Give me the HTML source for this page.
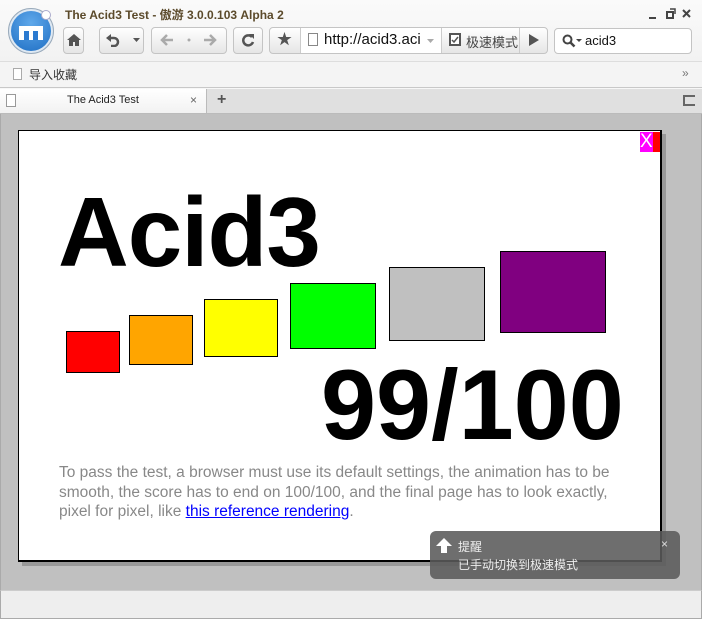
<!DOCTYPE html>
<html><head><meta charset="utf-8"><style>
*{margin:0;padding:0;box-sizing:border-box}
body{width:702px;height:619px;overflow:hidden;background:#f7f7f7;font-family:"Liberation Sans","Noto Sans CJK SC",sans-serif;position:relative}
.a{position:absolute}
.btn{position:absolute;border:1px solid #c4c4c4;border-radius:4px;background:linear-gradient(#fff,#f0f0f0 60%,#e6e6e6)}
.ic{position:absolute;color:#555;font-size:15px;line-height:15px}
.box{position:absolute;border:1px solid #000}
svg{position:absolute}
</style></head><body>
<div class="a" style="left:0;top:0;width:702px;height:62px;background:linear-gradient(#fafafa,#f2f2f2)"></div>
<!-- logo -->
<div class="a" style="left:8px;top:8px;width:46px;height:46px;border-radius:50%;background:#dfe9f3;border:1px solid #9ab"></div>
<div class="a" style="left:11px;top:11px;width:40px;height:40px;border-radius:50%;background:radial-gradient(circle at 50% 30%,#5fa8ea,#1f6fc4)"></div>
<div class="a" style="left:41px;top:10px;width:10px;height:10px;border-radius:50%;background:#fff;border:1px solid #aac"></div>
<div class="a" style="left:19px;top:26px;width:24px;height:14px;background:#fff"></div>
<div class="a" style="left:24px;top:31px;width:5px;height:9px;background:#2b7ad0"></div>
<div class="a" style="left:33px;top:31px;width:5px;height:9px;background:#2b7ad0"></div>
<div class="a" style="left:65px;top:6px;font-size:12px;font-weight:bold;color:#5b4a2b">The Acid3 Test - 傲游 3.0.0.103 Alpha 2</div>
<svg style="left:648px;top:8px" width="50" height="12" viewBox="0 0 50 12"><path d="M1 10h7" stroke="#444" stroke-width="2"/><rect x="19" y="4" width="6" height="6" fill="none" stroke="#444" stroke-width="2"/><path d="M22 1h5v5" fill="none" stroke="#444" stroke-width="1.5"/><path d="M35 2l7 7M42 2l-7 7" stroke="#444" stroke-width="2"/></svg>
<div class="btn" style="left:63px;top:27px;width:21px;height:27px"></div>
<svg style="left:67px;top:34px" width="14" height="12" viewBox="0 0 14 12"><path d="M7 0L0 6h2v6h4V8h2v4h4V6h2z" fill="#555"/></svg>
<div class="btn" style="left:99px;top:27px;width:45px;height:27px"></div>
<svg style="left:106px;top:33px" width="14" height="14" viewBox="0 0 14 14"><path d="M3 5h5a4 4 0 0 1 0 8H5" fill="none" stroke="#555" stroke-width="2.5"/><path d="M0 5l5-4v8z" fill="#555"/></svg>
<svg style="left:133px;top:38px" width="7" height="4"><path d="M0 0h7L3.5 4z" fill="#555"/></svg>
<div class="btn" style="left:151px;top:27px;width:76px;height:27px"></div>
<svg style="left:160px;top:34px" width="60" height="12" viewBox="0 0 60 12"><path d="M2 6h11M7 1L2 6l5 5" fill="none" stroke="#aaa" stroke-width="2.5"/><circle cx="29" cy="6" r="1.5" fill="#aaa"/><path d="M44 6h11M50 1l5 5-5 5" fill="none" stroke="#aaa" stroke-width="2.5"/></svg>
<div class="btn" style="left:233px;top:27px;width:30px;height:27px"></div>
<svg style="left:241px;top:33px" width="14" height="14" viewBox="0 0 14 14"><path d="M11 4A5 5 0 1 0 12 9" fill="none" stroke="#555" stroke-width="2.5"/><path d="M8 1h5v5z" fill="#555"/></svg>
<div class="btn" style="left:269px;top:27px;width:279px;height:27px"></div>
<div class="ic" style="left:277px;top:32px">★</div>
<div class="a" style="left:300px;top:28px;width:142px;height:25px;background:#fff;border-left:1px solid #ccc;border-right:1px solid #ccc"></div>
<div class="a" style="left:308px;top:33px;width:10px;height:13px;border:1px solid #888;background:#fff"></div>
<div class="a" style="left:324px;top:31px;font-size:15px;color:#111;width:96px;overflow:hidden;white-space:nowrap">http://acid3.acid3</div>
<svg style="left:427px;top:39px" width="7" height="4"><path d="M0 0h7L3.5 4z" fill="#aaa"/></svg>
<div class="a" style="left:449px;top:33px;width:12px;height:13px;border:2px solid #555;background:#fff"></div>
<svg style="left:451px;top:36px" width="8" height="8"><path d="M1 4l2 2 4-5" fill="none" stroke="#555" stroke-width="1.5"/></svg>
<div class="a" style="left:466px;top:32px;font-size:13px;color:#444">极速模式</div>
<div class="a" style="left:519px;top:28px;border-left:1px solid #ccc;height:25px"></div>
<svg style="left:529px;top:34px" width="10" height="12"><path d="M0 0l10 6-10 6z" fill="#555"/></svg>
<div class="a" style="left:554px;top:28px;width:138px;height:26px;border:1px solid #c4c4c4;border-radius:4px;background:#fff"></div>
<svg style="left:562px;top:34px" width="20" height="14" viewBox="0 0 20 14"><circle cx="5.5" cy="5.5" r="4" fill="none" stroke="#444" stroke-width="2"/><path d="M8.5 8.5l4 4" stroke="#444" stroke-width="2.5"/><path d="M14 5h6l-3 3z" fill="#444"/></svg>
<div class="a" style="left:585px;top:33px;font-size:13px;color:#111">acid3</div>
<!-- bookmarks -->
<div class="a" style="left:0;top:61px;width:702px;height:27px;background:#f4f4f4;border-top:1px solid #ddd;border-bottom:1px solid #c8c8c8"></div>
<div class="a" style="left:13px;top:68px;width:9px;height:12px;border:1px solid #aaa;background:#fff"></div>
<div class="a" style="left:29px;top:66px;font-size:12px;color:#333">导入收藏</div>
<div class="a" style="left:682px;top:66px;font-size:12px;color:#777">»</div>
<!-- tabs -->
<div class="a" style="left:0;top:89px;width:702px;height:25px;background:#e0e0e0;border-bottom:1px solid #bbb"></div>
<div class="a" style="left:0;top:89px;width:207px;height:24px;background:linear-gradient(#fff,#f2f2f2);border-right:1px solid #bbb"></div>
<div class="a" style="left:6px;top:94px;width:10px;height:13px;border:1px solid #999;background:#fff"></div>
<div class="a" style="left:67px;top:94px;font-size:11px;color:#222">The Acid3 Test</div>
<div class="a" style="left:190px;top:93px;font-size:12px;color:#666">×</div>
<div class="a" style="left:217px;top:91px;font-size:16px;color:#555;font-weight:bold">+</div>
<div class="a" style="left:683px;top:95px;width:12px;height:11px;border:2px solid #666;border-right:none"></div>
<!-- content -->
<div class="a" style="left:0;top:114px;width:702px;height:476px;background:#c0c0c0;border-left:1px solid #aaa;border-right:1px solid #aaa"></div>
<div class="a" style="left:22px;top:134px;width:644px;height:432px;background:#999"></div>
<div class="a" style="left:18px;top:130px;width:644px;height:432px;background:#fff;border:2px solid #000;border-width:1px 2px 2px 1px"></div>
<div class="a" style="left:640px;top:132px;width:13px;height:20px;background:#f0f"></div>
<div class="a" style="left:653px;top:132px;width:7px;height:20px;background:#f00"></div>
<div class="a" style="left:640px;top:131px;font-size:19px;color:#fff;line-height:22px">X</div>
<div class="a" style="left:58px;top:177px;font-size:98px;font-weight:bold;line-height:110px;color:#000;letter-spacing:-1px">Acid3</div>
<div class="box" style="left:66px;top:331px;width:54px;height:42px;background:#f00"></div>
<div class="box" style="left:129px;top:315px;width:64px;height:50px;background:#ffa500"></div>
<div class="box" style="left:204px;top:299px;width:74px;height:58px;background:#ff0"></div>
<div class="box" style="left:290px;top:283px;width:86px;height:66px;background:#0f0"></div>
<div class="box" style="left:389px;top:267px;width:96px;height:74px;background:#c0c0c0"></div>
<div class="box" style="left:500px;top:251px;width:106px;height:82px;background:#800080"></div>
<div class="a" style="left:321px;top:350px;font-size:99px;font-weight:bold;line-height:110px;color:#000">99/100</div>
<div class="a" style="left:59px;top:463px;width:560px;font-size:15.5px;line-height:19.5px;color:#888">To pass the test, a browser must use its default settings, the animation has to be smooth, the score has to end on 100/100, and the final page has to look exactly, pixel for pixel, like <span style="color:#00f;text-decoration:underline">this reference rendering</span>.</div>
<!-- toast -->
<div class="a" style="left:430px;top:531px;width:250px;height:48px;border-radius:6px;background:rgba(90,90,90,0.88)"></div>
<svg style="left:436px;top:538px" width="16" height="15"><path d="M8 0L0 8h5v7h6V8h5z" fill="#fff"/></svg>
<div class="a" style="left:458px;top:538px;font-size:12px;color:#eee">提醒</div>
<div class="a" style="left:458px;top:556px;font-size:12px;color:#eee">已手动切换到极速模式</div>
<div class="a" style="left:661px;top:537px;font-size:12px;color:#ddd">×</div>
<!-- status -->
<div class="a" style="left:0;top:590px;width:702px;height:29px;background:#eee;border-top:1px solid #ccc;border-left:1px solid #aaa;border-right:1px solid #aaa;border-bottom:1px solid #aaa"></div>
</body></html>
